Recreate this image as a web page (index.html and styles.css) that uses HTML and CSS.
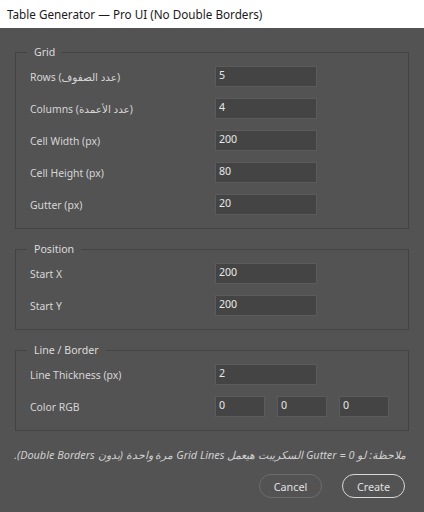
FILE: index.html
```html
<!DOCTYPE html>
<html>
<head>
<meta charset="utf-8">
<link rel="stylesheet" href="styles.css">
</head>
<body>
<div class="titlebar">Table Generator — Pro UI (No Double Borders)</div>
<div class="dialog">
  <fieldset class="panel">
    <legend>Grid</legend>
    <div class="row"><span class="label">Rows (عدد الصفوف)</span><input class="field" value="5"></div>
    <div class="row"><span class="label">Columns (عدد الأعمدة)</span><input class="field" value="4"></div>
    <div class="row"><span class="label">Cell Width (px)</span><input class="field" value="200"></div>
    <div class="row"><span class="label">Cell Height (px)</span><input class="field" value="80"></div>
    <div class="row"><span class="label">Gutter (px)</span><input class="field" value="20"></div>
  </fieldset>
  <fieldset class="panel">
    <legend>Position</legend>
    <div class="row"><span class="label">Start X</span><input class="field" value="200"></div>
    <div class="row"><span class="label">Start Y</span><input class="field" value="200"></div>
  </fieldset>
  <fieldset class="panel">
    <legend>Line / Border</legend>
    <div class="row"><span class="label">Line Thickness (px)</span><input class="field" value="2"></div>
    <div class="row"><span class="label">Color RGB</span>
      <div class="rgb"><input class="field small" value="0"><input class="field small" value="0"><input class="field small" value="0"></div>
    </div>
  </fieldset>
  <p class="note" dir="rtl">ملاحظة: لو Gutter = 0 السكريبت هيعمل Grid Lines مرة واحدة (بدون Double Borders).</p>
  <div class="buttons">
    <button class="btn cancel">Cancel</button>
    <button class="btn create">Create</button>
  </div>
</div>
</body>
</html>
```
FILE: styles.css
```css
html, body {
  margin: 0;
  padding: 0;
  background: #535353;
  font-family: "Noto Sans", "DejaVu Sans", sans-serif;
}
body {
  width: 424px;
  height: 512px;
  overflow: hidden;
}
.titlebar {
  height: 28px;
  background: #ffffff;
  color: #1a1a1a;
  font-size: 11.7px;
  line-height: 28px;
  padding-left: 7px;
  box-sizing: border-box;
}
.dialog {
  padding: 17px 15px 0 15px;
}
.panel {
  margin: 0 0 13px 0;
  border: 1px solid #434343;
  padding: 7px 15px 13px 14px;
  display: flex;
  flex-direction: column;
  gap: 11px;
}
.panel legend {
  margin-left: -3px;
  padding: 0 7px;
  font-size: 10.6px;
  line-height: 14px;
  color: #dcdcdc;
}
.row {
  display: flex;
  align-items: center;
  height: 21px;
}
.label {
  width: 185px;
  font-size: 10.4px;
  color: #d6d6d6;
}
.field {
  box-sizing: border-box;
  width: 102px;
  height: 21px;
  background: #444444;
  border: 1px solid #5b5b5b;
  color: #e6e6e6;
  font-family: "Noto Sans", sans-serif;
  font-size: 10.6px;
  padding: 0 0 3px 3px;
  margin: 0;
  outline: none;
}
.rgb {
  display: flex;
  gap: 12px;
}
.field.small {
  width: 50px;
}
.note {
  margin: 16px 3px 0 1px;
  font-size: 10.9px;
  font-style: italic;
  color: #cfcfcf;
  text-align: right;
  white-space: nowrap;
}
.buttons {
  display: flex;
  justify-content: flex-end;
  gap: 20px;
  margin-top: 12px;
  padding-right: 4px;
}
.btn {
  width: 63px;
  height: 24px;
  border-radius: 12px;
  background: transparent;
  font-family: "Noto Sans", sans-serif;
  font-size: 10.8px;
  color: #e0e0e0;
  padding: 0;
}
.btn.cancel {
  border: 1px solid #6c6c6c;
}
.btn.create {
  border: 1.5px solid #d8d8d8;
}
```
